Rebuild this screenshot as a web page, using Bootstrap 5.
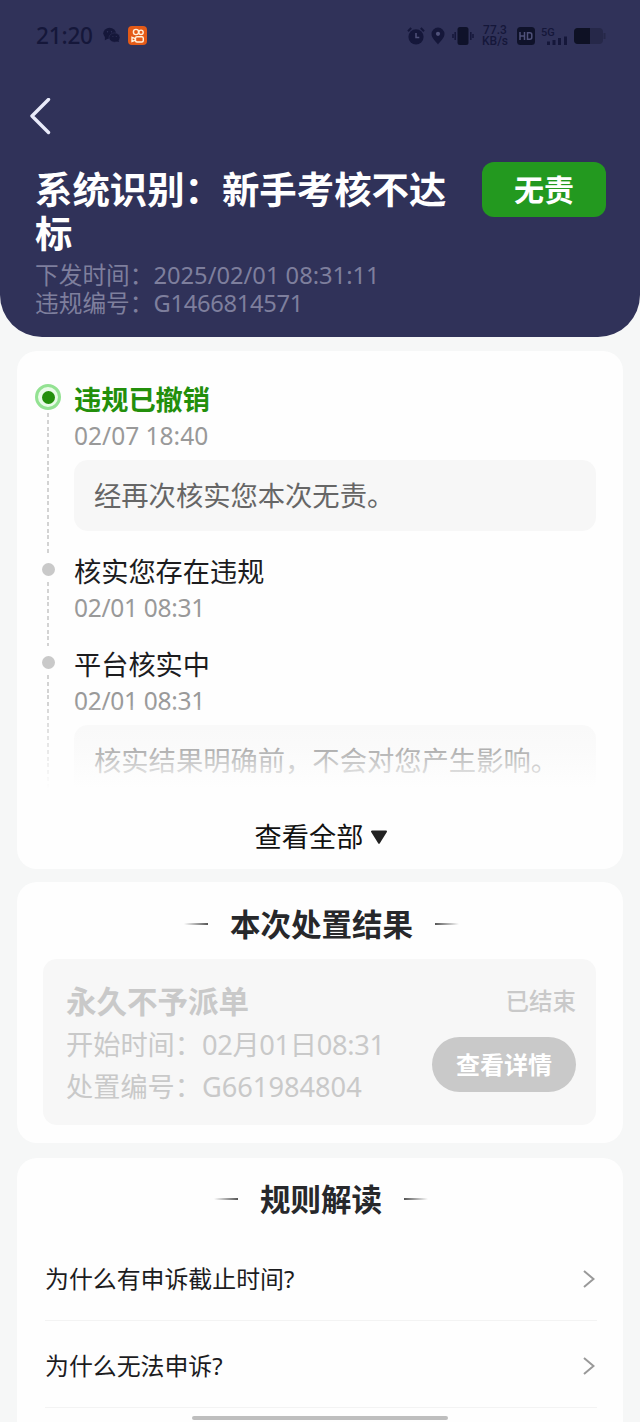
<!DOCTYPE html>
<html lang="zh-CN">
<head>
<meta charset="utf-8">
<meta name="viewport" content="width=device-width, initial-scale=1">
<title>违规详情</title>
<link href="https://cdn.jsdelivr.net/npm/bootstrap@5.3.0/dist/css/bootstrap.min.css" rel="stylesheet">
<style>
body{background:#f6f7f7;height:1422px;overflow:hidden;font-family:"Noto Sans","Noto Sans CJK SC",sans-serif;color:#1c1c1e}
.top-panel{background:#303259;height:337px;border-radius:0 0 42px 42px}
.status-row{height:71px;color:#15173a}
.clock{font-size:22.6px;line-height:30px;font-weight:500;letter-spacing:-.2px;width:58px;white-space:nowrap}
.speed{font:500 12px/11px "Roboto",sans-serif;width:28px;text-align:center;white-space:nowrap}
.back-row{height:91px}
.case-title{font-size:37.4px;line-height:44px;font-weight:700;padding-top:6px;width:430px}
.verdict{width:124px;height:55px;border-radius:12px;background:#23991f;font-size:30px;line-height:56px;font-weight:700}
.meta{font-size:23.7px;line-height:28px;color:#7e7f9d;padding-top:5px}
.panel-box{margin:0 17px;border-radius:20px;background:#fefefe}
.flow-card{height:518px;margin-top:14px;padding:32px 27px 0 17px}
.flow-list{height:413px}
.rail{width:28px;margin-right:12px}
.ring{width:26px;height:26px;border:3px solid #93e292;background:#e9fbe8;margin-top:1px}
.ring i{width:13px;height:13px;background:#238f0b}
.dot{width:13px;height:13px;background:#c9c9c9;margin-top:8px}
.dash{width:2px;margin:6px 0 2px;background:repeating-linear-gradient(#d3d3d3 0 4px,transparent 4px 6.8px)}
.ring + .dash{margin-top:3px}
.step-name{font-size:27.2px;line-height:34px;height:32px}
.step-time{font-size:24.5px;line-height:41px;color:#999}
.tight{letter-spacing:-.3px}
.note{margin-top:4px;height:71px;border-radius:14px;background:#f7f7f7;padding-left:20px;font-size:27.3px;line-height:72px;color:#666;white-space:nowrap}
.green{color:#238f0b;font-weight:700}
.fader{position:absolute;left:0;right:0;bottom:0;height:90px;background:linear-gradient(rgba(254,254,254,.1),rgba(254,254,254,.5) 50%,#fefefe 92%)}
.more{font-size:27.2px;line-height:40px;color:#111}
.head-line{font-size:30.5px;line-height:40px;font-weight:700;color:#27282b;gap:22px}
.head-line::before,.head-line::after{content:"";width:24px;height:2px;background:linear-gradient(90deg,transparent,#555)}
.head-line::after{background:linear-gradient(90deg,#555,transparent)}
.result-card{height:261px;margin-top:13px;padding:22px 27px 0 26px}
.result{height:166px;margin-top:15px;border-radius:14px;background:#f7f7f7;color:#c9c9c9;padding:21px 20px 0 23px}
.result-name{font-size:30.5px;line-height:42px;font-weight:700}
.result-row{font-size:27.2px;line-height:42px;white-space:nowrap}
.ended{font-size:23.5px;line-height:42px;font-weight:500}
.detail-btn{width:144px;height:55px;margin-top:15px;background:#c9c9c9;color:#fff;font-size:24px;line-height:55px;font-weight:700}
.rule-card{height:300px;margin-top:15px;padding:21px 26px 0 28px}
.ask{height:87px;border-bottom:1px solid #f3f3f3;font-size:23.9px;line-height:30px;padding:3px 2px 0 0}
.ask:first-child{height:84px;padding-top:0}
.home-bar{position:fixed;left:192px;bottom:2px;width:256px;height:4px;border-radius:2px;background:#bebebe}
</style>
</head>
<body>
<header class="top-panel">
  <div class="status-row d-flex align-items-center justify-content-between">
    <div class="d-flex align-items-center" style="padding-left:36px">
      <span class="clock">21:20</span>
      <svg class="ms-2" width="19" height="17" viewBox="0 0 20 18"><g fill="#15173a"><ellipse cx="8" cy="6.7" rx="6.7" ry="5.8"/><path d="M3 10l0 4 4-2z"/><ellipse cx="13.2" cy="11.2" rx="5.8" ry="4.9" stroke="#303259" stroke-width=".6"/><path d="M15 15l3 1-1-3z"/></g><g fill="#303259"><circle cx="5.8" cy="5" r=".7"/><circle cx="10" cy="5" r=".7"/><circle cx="11.5" cy="10" r=".6"/><circle cx="15" cy="10" r=".6"/></g></svg>
      <svg style="margin-left:7px" width="19" height="19" viewBox="0 0 19 19"><rect width="19" height="19" rx="4" fill="#e45a17"/><g fill="none" stroke="#fff1dc" stroke-width="1.4"><circle cx="8" cy="6" r="2.6"/><circle cx="13" cy="6.3" r="2.2"/><rect x="7.5" y="10.7" width="7.800" height="5.300" rx="1.500"/><path d="M4 11.300l3.300 1.300v1.600L4 15.500z"/></g></svg>
    </div>
    <div class="d-flex align-items-center" style="padding-right:34px">
      <svg width="18" height="18" viewBox="0 0 18 18"><circle cx="9" cy="9.800" r="7.600" fill="#15173a"/><path d="M1 4.200L4.200 1M17 4.200L13.800 1" stroke="#15173a" stroke-width="2"/><path d="M9 6v4.500h3.300" fill="none" stroke="#50527a" stroke-width="1.500"/></svg>
      <svg style="margin-left:6px" width="14" height="18" viewBox="0 0 14 18"><path d="M7 .5a6.500 6.500 0 0 1 6.500 6.500C13.500 11 9 14.500 7 17.500 5 14.500.5 11 .5 7A6.500 6.500 0 0 1 7 .5z" fill="#15173a"/><circle cx="7" cy="6.800" r="2.100" fill="#50527a"/></svg>
      <svg style="margin-left:7px" width="22" height="18" viewBox="0 0 22 18"><rect x="5.500" width="11" height="18" rx="2.500" fill="#0f122a"/><path d="M3.200 5v8M1 7v4M18.800 5v8M21 7v4" stroke="#15173a" stroke-width="1.500"/></svg>
      <div class="speed" style="margin-left:7px"><div>77.3</div><div>KB/s</div></div>
      <svg style="margin-left:8px" width="18" height="18" viewBox="0 0 18 18"><rect width="18" height="18" rx="3.500" fill="#0f122a"/><path d="M3 5v8M7.500 5v8M3 9h4.500M10.500 5.700h2.300q2 0 2 2v2.600q0 2-2 2h-2.300z" fill="none" stroke="#50527a" stroke-width="1.500"/></svg>
      <svg style="margin-left:6px" width="28" height="22" viewBox="0 0 28 22"><text x="0" y="10.500" font-size="11" font-weight="500" font-family="Roboto" fill="#15173a">5G</text><path d="M7.500 20v-3.500M13 20v-5M18.500 20v-7M24.500 20v-8.500" stroke="#15173a" stroke-width="3"/></svg>
      <svg style="margin-left:5px" width="32" height="16" viewBox="0 0 32 16"><rect width="29" height="16" rx="4" fill="#262849"/><path d="M4 0h12v16H4a4 4 0 0 1-4-4V4a4 4 0 0 1 4-4z" fill="#0e1124"/><path d="M30.500 5v6" stroke="#262849" stroke-width="2"/></svg>
    </div>
  </div>
  <div class="back-row d-flex align-items-center" style="padding-left:30px">
    <svg width="22" height="38" viewBox="0 0 22 38"><path d="M18.500 1.500L2 18 18.500 34.500" fill="none" stroke="#e9ebfa" stroke-width="3.400" stroke-linecap="round" stroke-linejoin="round"/></svg>
  </div>
  <div class="d-flex justify-content-between align-items-start text-white" style="padding:0 34px 0 35px">
    <h1 class="case-title m-0">系统识别：新手考核不达标</h1>
    <div class="verdict text-center flex-shrink-0">无责</div>
  </div>
  <div class="meta" style="padding-left:35px">
    <div>下发时间：2025/02/01 08:31:11</div>
    <div>违规编号：<span class="tight">G1466814571</span></div>
  </div>
</header>

<section class="panel-box flow-card">
  <div class="flow-list position-relative">
    <div class="d-flex" style="height:172px">
      <div class="rail d-flex flex-column align-items-center">
        <div class="ring rounded-circle d-flex align-items-center justify-content-center flex-shrink-0"><i class="rounded-circle"></i></div>
        <div class="dash flex-grow-1"></div>
      </div>
      <div class="flex-grow-1">
        <div class="step-name green">违规已撤销</div>
        <div class="step-time">02/07 18:40</div>
        <div class="note">经再次核实您本次无责。</div>
      </div>
    </div>
    <div class="d-flex" style="height:93px">
      <div class="rail d-flex flex-column align-items-center"><div class="dot rounded-circle"></div><div class="dash flex-grow-1"></div></div>
      <div class="flex-grow-1">
        <div class="step-name">核实您存在违规</div>
        <div class="step-time tight">02/01 08:31</div>
      </div>
    </div>
    <div class="d-flex" style="height:148px">
      <div class="rail d-flex flex-column align-items-center"><div class="dot rounded-circle"></div><div class="dash flex-grow-1"></div></div>
      <div class="flex-grow-1">
        <div class="step-name">平台核实中</div>
        <div class="step-time tight">02/01 08:31</div>
        <div class="note">核实结果明确前，不会对您产生影响。</div>
      </div>
    </div>
    <div class="fader"></div>
  </div>
  <div class="more d-flex align-items-center justify-content-center" style="padding:21px 0 0 13px">
    <span>查看全部</span>
    <svg style="margin-left:7px" width="18" height="15" viewBox="0 0 18 15"><path d="M2 1.500h14L9 12.800z" fill="#222" stroke="#222" stroke-width="2" stroke-linejoin="round"/></svg>
  </div>
</section>

<section class="panel-box result-card">
  <h2 class="head-line d-flex align-items-center justify-content-center m-0 ps-1">本次处置结果</h2>
  <div class="result d-flex justify-content-between">
    <div>
      <div class="result-name">永久不予派单</div>
      <div class="result-row" style="padding-top:2px">开始时间：<span class="tight">02月01日08:31</span></div>
      <div class="result-row">处置编号：G661984804</div>
    </div>
    <div class="d-flex flex-column align-items-end">
      <span class="ended">已结束</span>
      <a class="detail-btn rounded-pill text-center text-decoration-none">查看详情</a>
    </div>
  </div>
</section>

<section class="panel-box rule-card">
  <h2 class="head-line d-flex align-items-center justify-content-center m-0">规则解读</h2>
  <div style="padding-top:18px">
    <div class="ask d-flex align-items-center justify-content-between"><span>为什么有申诉截止时间?</span>
      <svg width="12" height="18" viewBox="0 0 12 18"><path d="M1 1l9.500 8L1 17" fill="none" stroke="#999" stroke-width="2"/></svg></div>
    <div class="ask d-flex align-items-center justify-content-between"><span>为什么无法申诉?</span>
      <svg width="12" height="18" viewBox="0 0 12 18"><path d="M1 1l9.500 8L1 17" fill="none" stroke="#999" stroke-width="2"/></svg></div>
  </div>
</section>
<div class="home-bar"></div>
<script src="https://cdn.jsdelivr.net/npm/bootstrap@5.3.0/dist/js/bootstrap.bundle.min.js"></script>
</body>
</html>
